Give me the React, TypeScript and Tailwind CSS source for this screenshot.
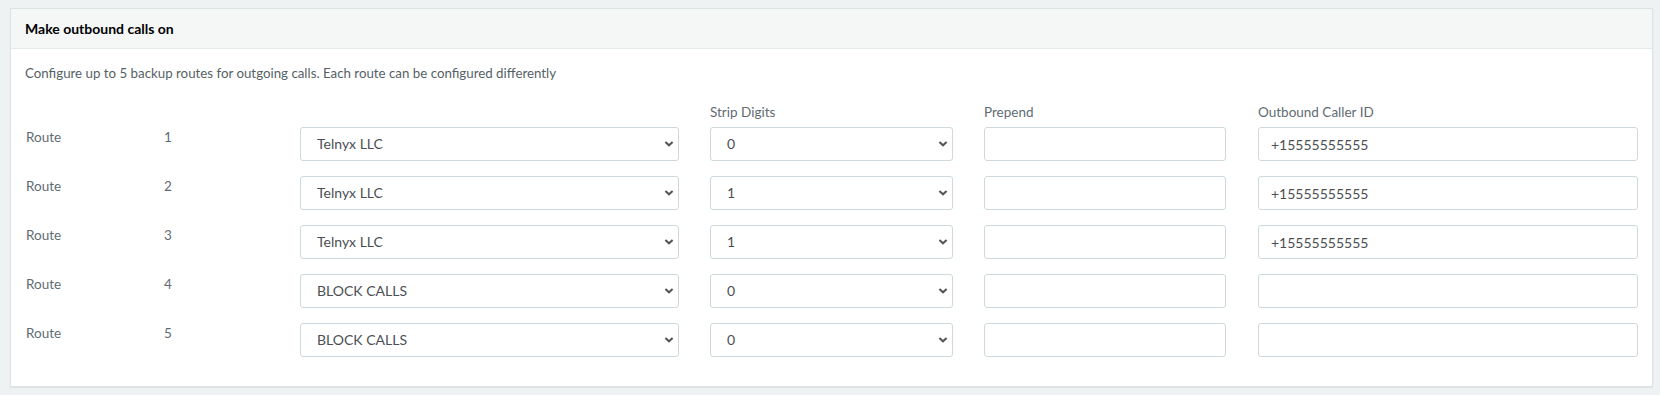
import React from 'react';

type Route = { id: number; provider: string; strip: string; prepend: string; callerId: string };

const routes: Route[] = [
  { id: 1, provider: 'Telnyx LLC', strip: '0', prepend: '', callerId: '+15555555555' },
  { id: 2, provider: 'Telnyx LLC', strip: '1', prepend: '', callerId: '+15555555555' },
  { id: 3, provider: 'Telnyx LLC', strip: '1', prepend: '', callerId: '+15555555555' },
  { id: 4, provider: 'BLOCK CALLS', strip: '0', prepend: '', callerId: '' },
  { id: 5, provider: 'BLOCK CALLS', strip: '0', prepend: '', callerId: '' },
];

const Chevron = () => (
  <svg width="10" height="7" viewBox="0 0 10 7" className="pointer-events-none absolute right-[5px] top-1/2 -translate-y-1/2">
    <path d="M1.4 1.4 L5 4.8 L8.6 1.4" fill="none" stroke="#555" strokeWidth="2" />
  </svg>
);

const Select = ({ value, options, width }: { value: string; options: string[]; width: string }) => (
  <div className={`relative shrink-0 ${width}`}>
    <select
      defaultValue={value}
      className="h-[34px] w-full appearance-none rounded-[3px] border border-[#cdd9dc] bg-white pl-[16px] pr-6 text-[14px] text-[#4b4f54] outline-none"
    >
      {options.map((o) => (
        <option key={o}>{o}</option>
      ))}
    </select>
    <Chevron />
  </div>
);

const TextInput = ({ value, width }: { value: string; width: string }) => (
  <input
    type="text"
    defaultValue={value}
    className={`h-[34px] shrink-0 ${width} rounded-[3px] border border-[#cdd9dc] bg-white px-[12px] text-[14px] text-[#4b4f54] outline-none`}
  />
);

export default function App() {
  return (
    <div className="min-h-[395px] bg-[#eef2f3] pt-[8px] font-['Lato','Liberation_Sans',sans-serif]">
      <div className="ml-[10px] w-[1643px] border border-[#dce3e5] bg-white shadow-[0_1px_1px_rgba(0,0,0,0.05)]">
        {/* Header */}
        <div className="flex h-[40px] items-center border-b border-[#e5eaeb] bg-[#f5f7f7] px-[14px]">
          <span className="text-[14px] font-bold text-black">Make outbound calls on</span>
        </div>

        {/* Body */}
        <div className="px-[14px] pb-[29px] pt-[14px]">
          <p className="text-[13.3px] leading-[20px] text-[#555f66]">
            Configure up to 5 backup routes for outgoing calls. Each route can be configured differently
          </p>

          <div className="mt-[19px] flex text-[13.5px] leading-[20px] text-[#5f6b74]">
            <div className="w-[139px] shrink-0" />
            <div className="w-[136px] shrink-0" />
            <div className="w-[379px] shrink-0" />
            <div className="ml-[31px] w-[243px] shrink-0">Strip Digits</div>
            <div className="ml-[31px] w-[242px] shrink-0">Prepend</div>
            <div className="ml-[32px] w-[380px] shrink-0">Outbound Caller ID</div>
          </div>

          <div className="mt-[5px] flex flex-col gap-[15px]">
            {routes.map((r) => (
              <div key={r.id} className="flex items-start text-[13.5px] leading-[20px] text-[#5f6b74]">
                <div className="w-[139px] shrink-0 pl-[1px]">Route</div>
                <div className="w-[136px] shrink-0">{r.id}</div>
                <Select value={r.provider} options={['Telnyx LLC', 'BLOCK CALLS']} width="w-[379px]" />
                <div className="ml-[31px] shrink-0">
                  <Select value={r.strip} options={['0', '1', '2', '3']} width="w-[243px]" />
                </div>
                <div className="ml-[31px] shrink-0">
                  <TextInput value={r.prepend} width="w-[242px]" />
                </div>
                <div className="ml-[32px] shrink-0">
                  <TextInput value={r.callerId} width="w-[380px]" />
                </div>
              </div>
            ))}
          </div>
        </div>
      </div>
    </div>
  );
}
